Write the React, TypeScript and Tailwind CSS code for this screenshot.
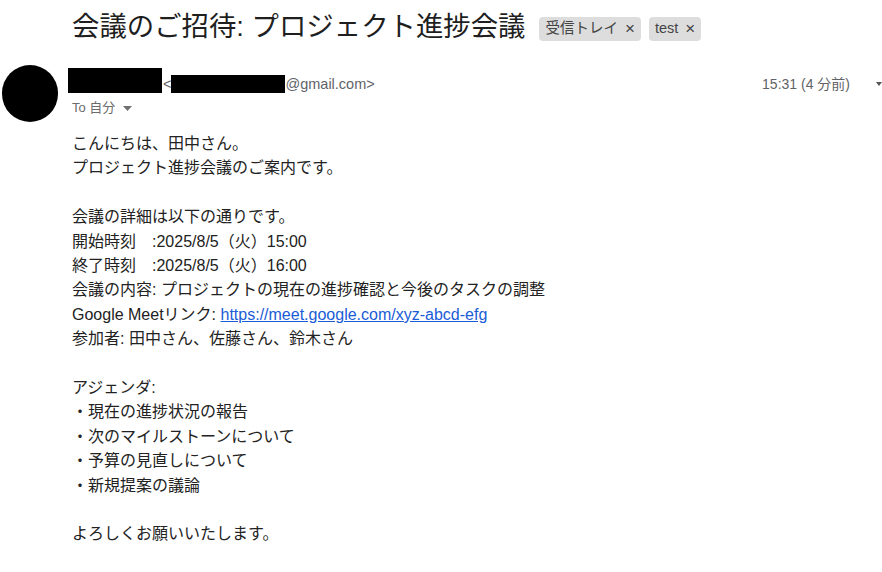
const font = "font-['Liberation_Sans','Noto_Sans_CJK_JP',sans-serif]";

const lines: (string | null)[] = [
  "こんにちは、田中さん。",
  "プロジェクト進捗会議のご案内です。",
  null,
  "会議の詳細は以下の通りです。",
  "開始時刻　:2025/8/5（火）15:00",
  "終了時刻　:2025/8/5（火）16:00",
  "会議の内容: プロジェクトの現在の進捗確認と今後のタスクの調整",
  "LINK",
  "参加者: 田中さん、佐藤さん、鈴木さん",
  null,
  "アジェンダ:",
  "・現在の進捗状況の報告",
  "・次のマイルストーンについて",
  "・予算の見直しについて",
  "・新規提案の議論",
  null,
  "よろしくお願いいたします。",
];

function Chip({ label }: { label: string }) {
  return (
    <span className="flex items-center h-[24px] px-[6px] rounded-[4px] bg-[#dddddd] text-[14.5px] text-[#444444]">
      {label}
      <span className="ml-[7px] text-[17px] leading-none text-[#444444]">×</span>
    </span>
  );
}

export default function App() {
  return (
    <div className={`w-[882px] h-[572px] overflow-hidden bg-white ${font}`}>
      {/* Subject */}
      <div className="flex items-center pl-[72px] pt-[9px]">
        <h1 className="text-[27.4px] leading-[36px] text-[#1f1f1f] whitespace-nowrap">
          会議のご招待: プロジェクト進捗会議
        </h1>
        <div className="flex items-center gap-[8px] ml-[14px] mt-[3px]">
          <Chip label="受信トレイ" />
          <Chip label="test" />
        </div>
      </div>

      {/* Sender */}
      <div className="flex h-[57px] mt-[20px]">
        <div className="ml-[2px] w-[56px] h-[57px] rounded-full bg-black shrink-0" />
        <div className="ml-[10px] pt-[3px] flex-1">
          <div className="flex items-end">
            <div className="w-[94px] h-[25px] bg-black" />
            <span className="ml-[1px] text-[14.5px] leading-[18px] text-[#5f6368]">&lt;</span>
            <div className="w-[114px] h-[18px] bg-black" />
            <span className="text-[14.5px] leading-[18px] text-[#5f6368]">@gmail.com&gt;</span>
          </div>
          <div className="flex items-center pl-[4px] mt-[5px] h-[20px] text-[13px] text-[#6b6b6b]">
            To 自分
            <svg className="ml-[8px]" width="9" height="5" viewBox="0 0 9 5">
              <path d="M0 0h9L4.5 5z" fill="#707070" />
            </svg>
          </div>
        </div>
        <div className="flex items-start pt-[10px]">
          <span className="text-[14px] leading-[18px] text-[#5f6368] whitespace-nowrap">15:31 (4 分前)</span>
          <svg className="ml-[26px] mt-[7px]" width="6" height="4" viewBox="0 0 6 4">
            <path d="M0 0h6L3 4z" fill="#555555" />
          </svg>
        </div>
      </div>

      {/* Body */}
      <div className="mt-[10px] pl-[72px] text-[16px] leading-[24.4px] text-[#222222]">
        {lines.map((line, i) =>
          line === null ? (
            <div key={i} className="h-[24.4px]" />
          ) : line === "LINK" ? (
            <div key={i}>
              Google Meetリンク:{" "}
              <a href="#" className="text-[#1a5cd6] underline">
                https://meet.google.com/xyz-abcd-efg
              </a>
            </div>
          ) : (
            <div key={i} className="whitespace-pre">
              {line}
            </div>
          )
        )}
      </div>
    </div>
  );
}
